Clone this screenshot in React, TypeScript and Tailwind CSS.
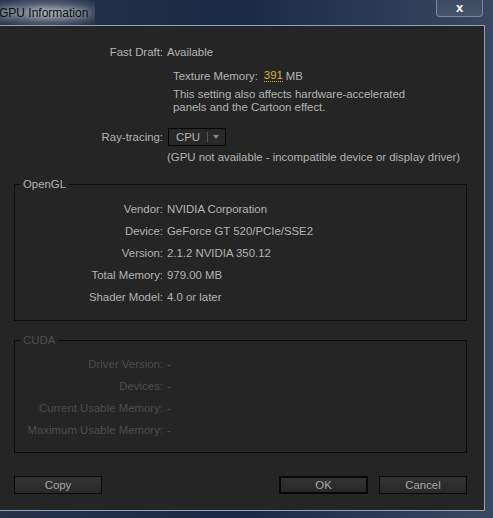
const font = "font-['Liberation_Sans',Arial,sans-serif]";

function Row({ label, value, dim = false, w = "w-[163px]" }: { label: string; value: string; dim?: boolean; w?: string }) {
  return (
    <div className={`flex h-[22px] items-center ${dim ? "text-[#4e4e4e]" : "text-[#b4b4b4]"}`}>
      <div className={`${w} shrink-0 text-right`}>{label}</div>
      <div className="pl-[4px]">{value}</div>
    </div>
  );
}

function Button({ children, focus = false, w = "w-[88px]" }: { children: string; focus?: boolean; w?: string }) {
  return (
    <div
      className={`${w} h-[18px] flex items-center justify-center bg-gradient-to-b from-[#333333] to-[#282828] text-[#a8a8a8] ${
        focus ? "border-2 border-[#080808]" : "border border-[#0a0a0a]"
      }`}
    >
      {children}
    </div>
  );
}

export default function App() {
  return (
    <div className={`w-[493px] h-[518px] flex flex-col bg-gradient-to-r from-[#26324a] via-[#1b2a45] to-[#3a4862] ${font}`}>
      {/* title bar */}
      <div className="h-[25px] shrink-0 flex items-start relative">
        <div className="h-[25px] w-[95px] flex items-center bg-[radial-gradient(ellipse_at_center,rgba(170,178,188,0.85)_0%,rgba(120,130,145,0.5)_55%,rgba(40,50,70,0)_100%)]">
          <span className="text-[12px] text-[#0a0a0a] ml-[-1px] pt-[1px] [text-shadow:0_0_6px_rgba(255,255,255,0.9)]">GPU Information</span>
        </div>
        <div className="ml-auto mr-[10px] w-[47px] h-[17px] rounded-b-[4px] border border-t-0 border-[#7b879a] bg-gradient-to-b from-[#3d4b63] to-[#45536b] flex items-center justify-center">
          <span className="text-white text-[13px] font-bold leading-none mt-[-2px]">x</span>
        </div>
      </div>

      {/* client area */}
      <div className="w-[485px] h-[486px] border-t border-r border-b border-[#93a1b6] bg-[#252525] text-[11.4px] leading-[14px] text-[#b4b4b4]">
        <div className="pt-[19px] flex">
          <div className="w-[163px] text-right">Fast Draft:</div>
          <div className="pl-[4px]">Available</div>
        </div>

        <div className="ml-[173px] mt-[10px] flex">
          <span>Texture Memory:</span>
          <span className="ml-[6px] text-[#d9b23c] border-b border-dotted border-[#d9b23c] leading-[12px] h-[13px]">391</span>
          <span className="ml-[3px]">MB</span>
        </div>
        <div className="ml-[173px] mt-[5px] leading-[13px]">
          <div>This setting also affects hardware-accelerated</div>
          <div>panels and the Cartoon effect.</div>
        </div>

        <div className="mt-[14px] flex items-center h-[18px]">
          <div className="w-[163px] text-right">Ray-tracing:</div>
          <div className="ml-[5px] w-[58px] h-[18px] border border-[#050505] bg-[#282828] flex items-center">
            <span className="pl-[7px] w-[38px]">CPU</span>
            <span className="w-px h-[10px] bg-[#5a5a5a]" />
            <svg width="16" height="10" viewBox="0 0 16 10" className="ml-[1px]">
              <path d="M4 3h6l-3 4z" fill="#8a8a8a" />
            </svg>
          </div>
        </div>
        <div className="ml-[167px] mt-[4px]">(GPU not available - incompatible device or display driver)</div>

        <fieldset className="ml-[14px] mt-[13px] w-[453px] border border-[#0c0c0c] px-0 pt-[7px] pb-[12px] m-0">
          <legend className="ml-[5px] px-[3px] leading-[14px]">OpenGL</legend>
          <Row w="w-[148px]" label="Vendor:" value="NVIDIA Corporation" />
          <Row w="w-[148px]" label="Device:" value="GeForce GT 520/PCIe/SSE2" />
          <Row w="w-[148px]" label="Version:" value="2.1.2 NVIDIA 350.12" />
          <Row w="w-[148px]" label="Total Memory:" value="979.00 MB" />
          <Row w="w-[148px]" label="Shader Model:" value="4.0 or later" />
        </fieldset>

        <fieldset className="ml-[14px] mt-[12px] w-[453px] border border-[#0c0c0c] px-0 pt-[6px] pb-[11px]">
          <legend className="ml-[5px] px-[3px] leading-[14px] text-[#4e4e4e]">CUDA</legend>
          <Row dim w="w-[148px]" label="Driver Version:" value="-" />
          <Row dim w="w-[148px]" label="Devices:" value="-" />
          <Row dim w="w-[148px]" label="Current Usable Memory:" value="-" />
          <Row dim w="w-[148px]" label="Maximum Usable Memory:" value="-" />
        </fieldset>

        <div className="mt-[23px] flex items-center px-[14px]">
          <Button w="w-[88px]">Copy</Button>
          <div className="ml-auto flex gap-[11px] mr-[3px]">
            <Button focus w="w-[89px]">OK</Button>
            <Button w="w-[88px]">Cancel</Button>
          </div>
        </div>
      </div>
    </div>
  );
}
